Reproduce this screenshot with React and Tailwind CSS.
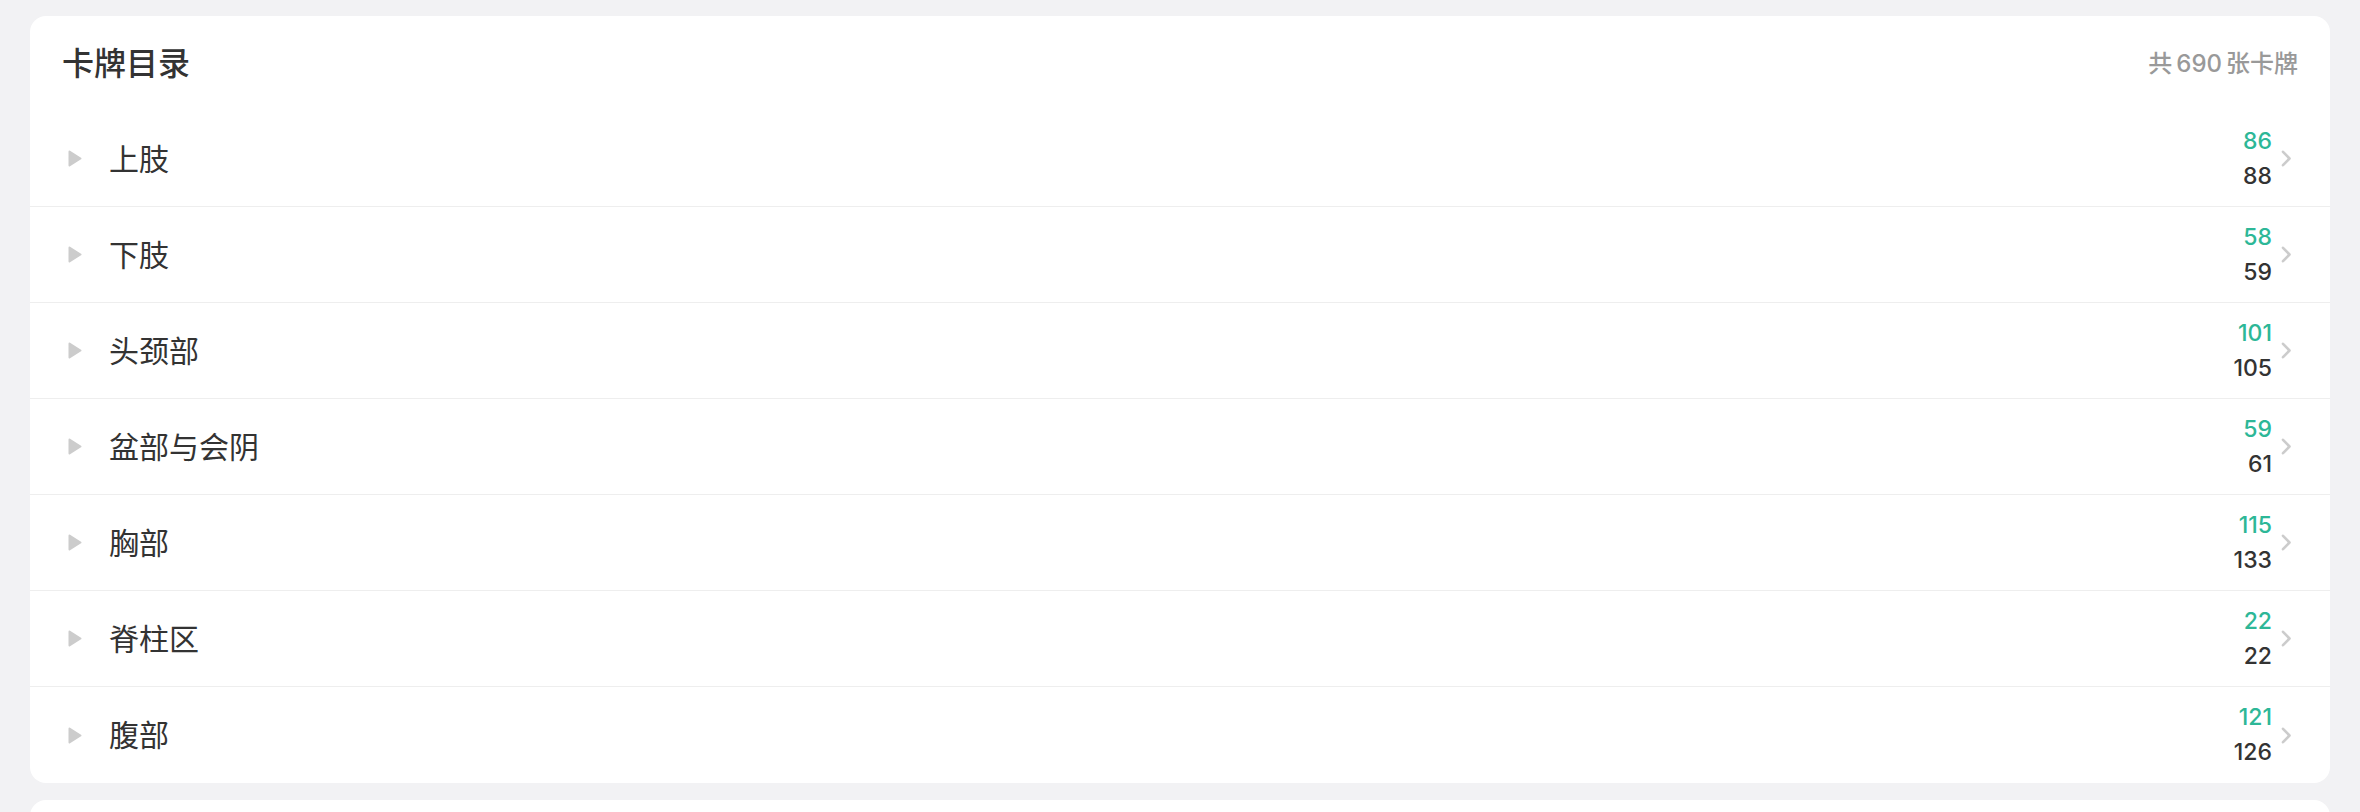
const groups = [
  { name: '上肢', done: 86, total: 88 },
  { name: '下肢', done: 58, total: 59 },
  { name: '头颈部', done: 101, total: 105 },
  { name: '盆部与会阴', done: 59, total: 61 },
  { name: '胸部', done: 115, total: 133 },
  { name: '脊柱区', done: 22, total: 22 },
  { name: '腹部', done: 121, total: 126 },
];

function Caret() {
  return (
    <svg width="14" height="17" viewBox="0 0 14 17" className="shrink-0">
      <path d="M1.5 1.5 L12.5 8.5 L1.5 15.5 Z" fill="#cccccc" stroke="#cccccc" strokeWidth="2" strokeLinejoin="round" />
    </svg>
  );
}

function Chevron() {
  return (
    <svg width="11" height="17" viewBox="0 0 11 17" className="shrink-0">
      <path d="M2 1.8 L8.5 8.5 L2 15.2" fill="none" stroke="#cccccc" strokeWidth="2.6" strokeLinecap="round" strokeLinejoin="round" />
    </svg>
  );
}

export default function App() {
  return (
    <div
      className="min-h-[812px] bg-[#f2f2f4] px-[30px] pt-4 flex flex-col gap-[17px]"
      style={{ fontFamily: 'Inter, "Noto Sans CJK SC", sans-serif' }}
    >
      <div className="bg-white rounded-2xl overflow-hidden">
        <div className="h-[95px] flex items-center justify-between pl-8 pr-8">
          <h2 className="text-[32px] font-medium text-[#333333] leading-none">卡牌目录</h2>
          <span className="text-[24px] font-medium text-[#999999] leading-none flex items-center">
            共<span className="mx-[4px]">690</span>张卡牌
          </span>
        </div>
        {groups.map((g, i) => (
          <div
            key={g.name}
            className={`h-[96px] flex items-center pl-[38px] pr-[38px] ${i < groups.length - 1 ? 'border-b border-[#eeeeee]' : ''}`}
          >
            <Caret />
            <span className="ml-[27px] text-[30px] text-[#333333] leading-none flex-1">{g.name}</span>
            <div className="flex flex-col items-end text-[23px] font-medium leading-[35px]">
              <span className="text-[#2db797]">{g.done}</span>
              <span className="text-[#333333]">{g.total}</span>
            </div>
            <div className="ml-[9px]">
              <Chevron />
            </div>
          </div>
        ))}
      </div>
      <div className="bg-white rounded-t-2xl h-[40px]" />
    </div>
  );
}
